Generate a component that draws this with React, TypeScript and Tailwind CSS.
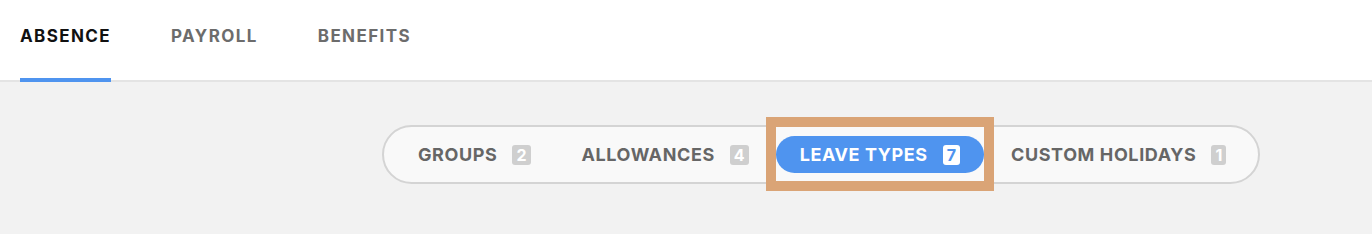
import type { ReactNode } from "react";

type SubTab = { label: string; count: number; active?: boolean };

const TOP_TABS = ["ABSENCE", "PAYROLL", "BENEFITS"];

const SUB_TABS: readonly SubTab[] = [
  { label: "GROUPS", count: 2 },
  { label: "ALLOWANCES", count: 4 },
  { label: "LEAVE TYPES", count: 7, active: true },
  { label: "CUSTOM HOLIDAYS", count: 1 },
];

function Badge({ children, active }: { children: ReactNode; active?: boolean }) {
  return (
    <span
      className={`ml-[15px] inline-flex h-[20px] items-center justify-center rounded-[3px] px-[4px] text-[16px] leading-none tracking-normal ${
        active ? "bg-white text-[#4f94ef]" : "bg-[#cfcfcf] text-white"
      }`}
    >
      {children}
    </span>
  );
}

export default function App() {
  return (
    <div className="h-[234px] w-[1372px] bg-[#f2f2f2] font-['Inter',sans-serif] font-bold">
      <header className="flex h-[82px] items-stretch gap-[60px] border-b-2 border-[#e4e4e4] bg-white px-[20px]">
        {TOP_TABS.map((tab, i) => (
          <div
            key={tab}
            className={`relative flex items-center pb-[7px] text-[17px] tracking-[1.4px] ${i === 0 ? "text-[#111]" : "text-[#6c6c6c]"}`}
          >
            {tab}
            {i === 0 && <span className="absolute -bottom-[2px] left-0 right-0 h-[4px] bg-[#4f94ef]" />}
          </div>
        ))}
      </header>

      <div className="ml-[382px] mt-[43px] flex w-fit items-center gap-[3px] rounded-full border-2 border-[#d4d4d4] bg-[#f9f9f9] py-[9px] pl-[10px] pr-[8px]">
        {SUB_TABS.map((tab) => (
          <div
            key={tab.label}
            className={`relative flex h-[37px] items-center rounded-full px-[24px] text-[18px] tracking-[0.6px] ${
              tab.active ? "bg-[#4f94ef] text-white" : "text-[#666]"
            }`}
          >
            {tab.label}
            <Badge active={tab.active}>{tab.count}</Badge>
            {tab.active && (
              <span className="pointer-events-none absolute -bottom-[18px] -left-[10px] -right-[10px] -top-[19px] border-[10px] border-[#daa476]" />
            )}
          </div>
        ))}
      </div>
    </div>
  );
}
